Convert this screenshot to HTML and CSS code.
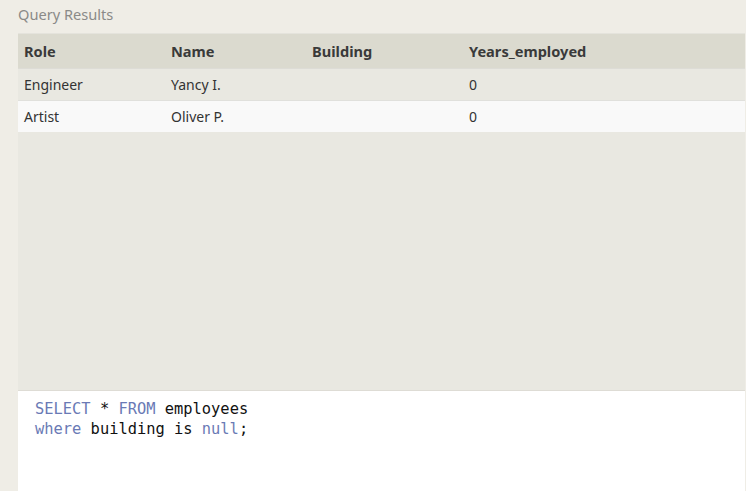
FILE: index.html
```html
<!DOCTYPE html>
<html>
<head>
<meta charset="utf-8">
<link rel="stylesheet" href="styles.css">
</head>
<body>
<div class="page">
  <div class="title">Query Results</div>
  <div class="panel">
    <div class="results">
      <div class="row head">
        <div class="cell">Role</div>
        <div class="cell">Name</div>
        <div class="cell">Building</div>
        <div class="cell">Years_employed</div>
      </div>
      <div class="row odd">
        <div class="cell">Engineer</div>
        <div class="cell">Yancy I.</div>
        <div class="cell"></div>
        <div class="cell">0</div>
      </div>
      <div class="row even">
        <div class="cell">Artist</div>
        <div class="cell">Oliver P.</div>
        <div class="cell"></div>
        <div class="cell">0</div>
      </div>
    </div>
    <div class="editor">
      <div class="line"><span class="kw">SELECT</span> * <span class="kw">FROM</span> employees</div>
      <div class="line"><span class="kw">where</span> building is <span class="kw">null</span>;</div>
    </div>
  </div>
</div>
</body>
</html>
```

FILE: styles.css
```css
html, body {
  margin: 0;
  padding: 0;
  background: #efede6;
}
.page {
  width: 746px;
  height: 491px;
  display: flex;
  flex-direction: column;
  padding: 0 1px 0 18px;
  box-sizing: border-box;
  font-family: "Noto Sans", "Open Sans", sans-serif;
}
.title {
  height: 33px;
  line-height: 29px;
  font-size: 14.6px;
  color: #8a8a88;
  flex: none;
}
.panel {
  flex: 1;
  display: flex;
  flex-direction: column;
  background: #e9e8e1;
  border-top: 1px solid #e4e3dc;
  min-height: 0;
}
.results {
  flex: 1;
}
.row {
  display: grid;
  grid-template-columns: 147px 141px 157px 1fr;
  align-items: center;
  font-size: 14px;
  color: #333;
}
.row .cell {
  padding-left: 6px;
}
.head {
  height: 34px;
  background: #dbdacf;
  font-weight: bold;
  font-size: 14.6px;
  color: #3a3a3a;
}
.odd {
  height: 31px;
  background: #e9e8e1;
  border-top: 1px solid #dddcd6;
}
.even {
  height: 31px;
  background: #f9f9f9;
  border-top: 1px solid #e0e0dc;
}
.editor {
  flex: none;
  height: 101px;
  box-sizing: border-box;
  background: #ffffff;
  border-top: 1px solid #dedcd5;
  padding: 8px 0 0 17px;
  font-family: "DejaVu Sans Mono", "Liberation Mono", monospace;
  font-size: 15.4px;
  line-height: 20px;
  color: #111;
}
.kw {
  color: #6a7ab5;
}
```
